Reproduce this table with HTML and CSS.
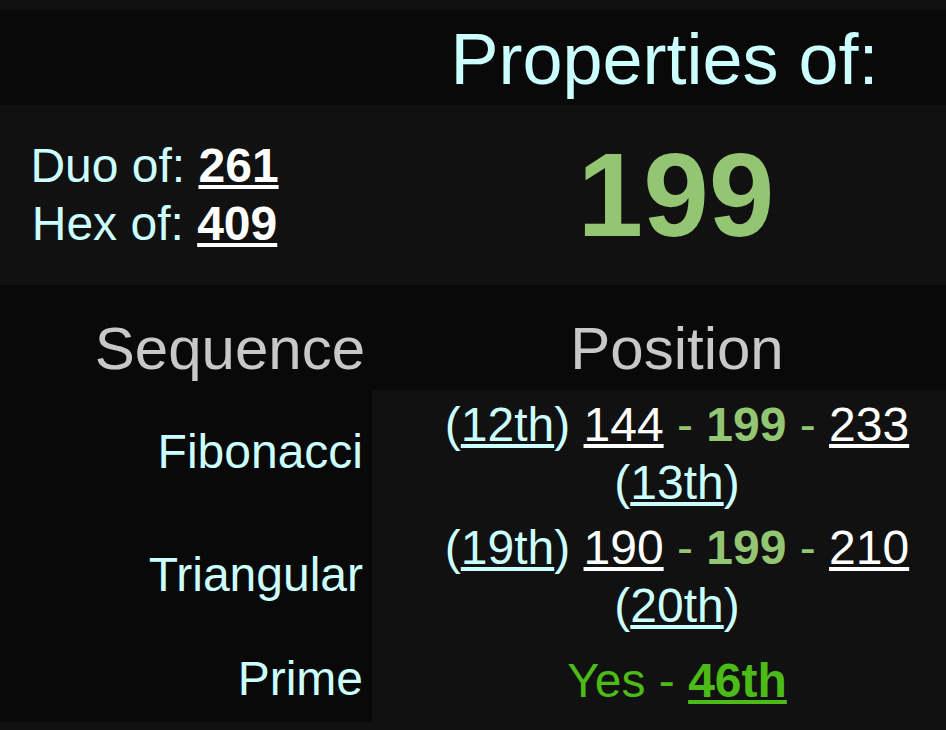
FILE: index.html
```html
<!DOCTYPE html>
<html>
<head>
<meta charset="utf-8">
<link rel="stylesheet" href="styles.css">
</head>
<body>
<div class="page">
  <div class="row head dark">
    <div class="cell"></div>
    <div class="cell title">Properties of:</div>
  </div>
  <div class="row main">
    <div class="cell rel">Duo of: <a class="big">261</a><br>Hex of: <a class="big">409</a></div>
    <div class="cell num">199</div>
  </div>
  <div class="row colhead dark">
    <div class="cell seqh">Sequence</div>
    <div class="cell posh">Position</div>
  </div>
  <div class="row seq first">
    <div class="cell label">Fibonacci</div>
    <div class="cell pos">(<a class="ord">12th</a>) <a class="n">144</a> <span class="g">- <b>199</b> -</span> <a class="n">233</a> (<a class="ord">13th</a>)</div>
  </div>
  <div class="row seq mid">
    <div class="cell label">Triangular</div>
    <div class="cell pos">(<a class="ord">19th</a>) <a class="n">190</a> <span class="g">- <b>199</b> -</span> <a class="n">210</a> (<a class="ord">20th</a>)</div>
  </div>
  <div class="row seq last">
    <div class="cell label">Prime</div>
    <div class="cell pos prime">Yes - <a class="pn">46th</a></div>
  </div>
</div>
</body>
</html>
```
FILE: styles.css
```css
html, body {
  margin: 0;
  background: #111111;
}
body {
  font-family: "Liberation Sans", Arial, Helvetica, sans-serif;
  color: #ccffff;
}
.page {
  padding-top: 10px;
}
.row {
  display: grid;
  grid-template-columns: 372px 1fr;
}
.dark {
  background: #090909;
}
a {
  color: inherit;
  text-decoration: underline;
}

.head {
  height: 95px;
  align-items: center;
}
.title {
  font-size: 72px;
  line-height: normal;
  text-align: center;
  padding-left: 11px;
  padding-top: 2px;
  color: #ccffff;
}

.main {
  height: 180px;
  align-items: center;
}
.rel {
  font-size: 48px;
  line-height: 1.2;
  text-align: center;
  padding-right: 63px;
}
.big {
  color: #ffffff;
  font-weight: bold;
}
.num {
  font-size: 118px;
  font-weight: bold;
  line-height: normal;
  color: #93c572;
  text-align: center;
  padding-left: 34px;
}

.colhead {
  font-size: 60px;
  line-height: 1.2;
  color: #c8c8c8;
  padding: 28px 0 5px;
}
.seqh {
  text-align: right;
  padding-right: 7px;
}
.posh {
  text-align: center;
  padding-left: 36px;
}

.seq {
  font-size: 48px;
  line-height: 58px;
}
.label {
  background: #090909;
  display: flex;
  align-items: center;
  justify-content: flex-end;
  padding-right: 9px;
}
.pos {
  background: #111111;
  text-align: center;
  padding: 6px 0 1px 36px;
}
.last .pos {
  padding: 16px 0 12px 36px;
}
.n {
  color: #ffffff;
}
.g {
  color: #93c572;
}
.prime {
  color: #4cbb17;
}
.pn {
  font-weight: bold;
}
```
